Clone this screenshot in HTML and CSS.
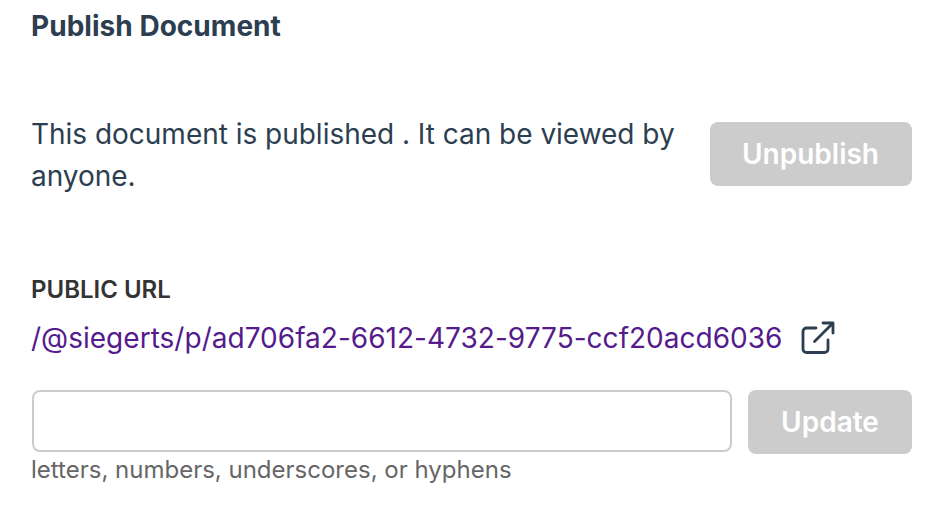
FILE: index.html
```html
<!DOCTYPE html>
<html lang="en">
<head>
<meta charset="utf-8">
<title>Publish Document</title>
<link rel="stylesheet" href="styles.css">
</head>
<body>
<main class="panel">
  <h1 class="title">Publish Document</h1>
  <section class="status">
    <p class="message">This document is published . It can be viewed by anyone.</p>
    <button class="button unpublish">Unpublish</button>
  </section>
  <h2 class="label">PUBLIC URL</h2>
  <div class="link-row">
    <a class="link">/@siegerts/p/ad706fa2-6612-4732-9775-ccf20acd6036</a>
    <svg class="icon" viewBox="0 0 36 36" fill="none" stroke="#2c3e50" stroke-width="2.8" stroke-linecap="round" stroke-linejoin="round"><path d="M16 8H6.500a3.500 3.500 0 0 0-3.500 3.500v17.500a3.500 3.500 0 0 0 3.500 3.500h18a3.500 3.500 0 0 0 3.500-3.500v-9M14.500 21.500 33 3M23 3h10v10"/></svg>
  </div>
  <form class="form">
    <input class="input" type="text" aria-label="Public URL">
    <button class="button update" type="button">Update</button>
  </form>
  <p class="hint">letters, numbers, underscores, or hyphens</p>
</main>
</body>
</html>
```
FILE: styles.css
```css
* { box-sizing: border-box; margin: 0; }
body { background: #fff; color: #2c3e50; font-family: Inter, sans-serif; }
.panel { padding: 5px 34px 0 31px; }
.title { font-size: 28px; line-height: 42px; font-weight: 700; letter-spacing: 0.03px; }
.status { display: flex; justify-content: space-between; margin-top: 66px; }
.message { width: 660px; font-size: 28px; line-height: 42px; letter-spacing: -0.02px; }
.button { height: 64px; border: 0; border-radius: 8px; padding: 0; background: #ccc; color: #fff; font: 600 28px Inter, sans-serif; }
.unpublish { width: 202px; margin-top: 9px; padding-right: 1px; }
.update { width: 164px; }
.label { margin-top: 75px; font-size: 24px; line-height: 36px; font-weight: 600; color: #333; }
.link-row { display: flex; align-items: center; gap: 18px; margin-top: 9px; }
.link { width: 751px; font-size: 28px; line-height: 42px; letter-spacing: 0.02px; color: #551a8b; white-space: nowrap; }
.icon { width: 36px; height: 36px; }
.form { display: flex; gap: 16px; margin: 31px 0 0 1px; }
.input { width: 700px; height: 62px; border: 2px solid #ccc; border-radius: 8px; padding: 0 16px; font: 28px Inter, sans-serif; }
.hint { margin-top: -2px; font-size: 24px; line-height: 36px; color: #666; }
```
